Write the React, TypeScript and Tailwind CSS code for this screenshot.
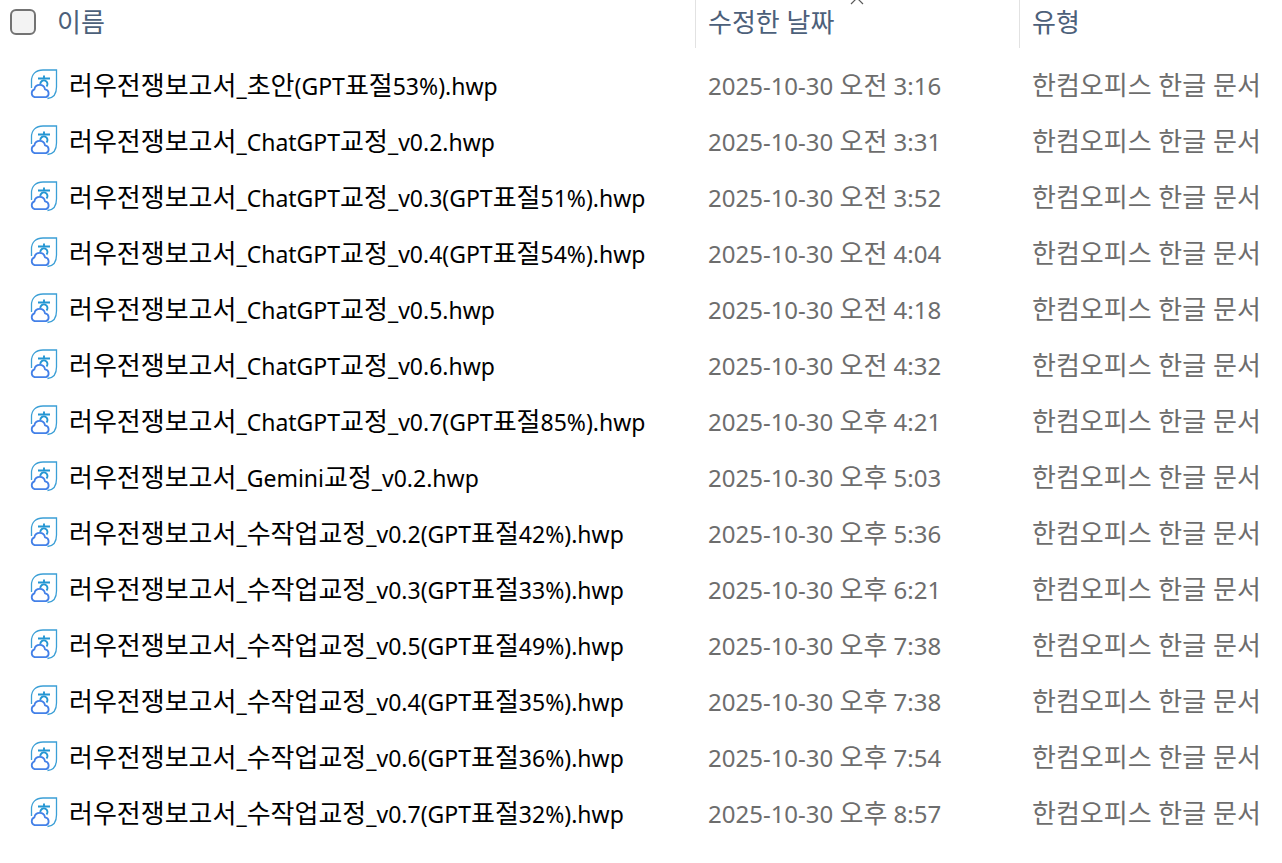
import React from 'react';

interface FileEntry {
  name: string;
  modified: string;
}

const files: FileEntry[] = [
  { name: '러우전쟁보고서_초안(GPT표절53%).hwp', modified: '2025-10-30 오전 3:16' },
  { name: '러우전쟁보고서_ChatGPT교정_v0.2.hwp', modified: '2025-10-30 오전 3:31' },
  { name: '러우전쟁보고서_ChatGPT교정_v0.3(GPT표절51%).hwp', modified: '2025-10-30 오전 3:52' },
  { name: '러우전쟁보고서_ChatGPT교정_v0.4(GPT표절54%).hwp', modified: '2025-10-30 오전 4:04' },
  { name: '러우전쟁보고서_ChatGPT교정_v0.5.hwp', modified: '2025-10-30 오전 4:18' },
  { name: '러우전쟁보고서_ChatGPT교정_v0.6.hwp', modified: '2025-10-30 오전 4:32' },
  { name: '러우전쟁보고서_ChatGPT교정_v0.7(GPT표절85%).hwp', modified: '2025-10-30 오후 4:21' },
  { name: '러우전쟁보고서_Gemini교정_v0.2.hwp', modified: '2025-10-30 오후 5:03' },
  { name: '러우전쟁보고서_수작업교정_v0.2(GPT표절42%).hwp', modified: '2025-10-30 오후 5:36' },
  { name: '러우전쟁보고서_수작업교정_v0.3(GPT표절33%).hwp', modified: '2025-10-30 오후 6:21' },
  { name: '러우전쟁보고서_수작업교정_v0.5(GPT표절49%).hwp', modified: '2025-10-30 오후 7:38' },
  { name: '러우전쟁보고서_수작업교정_v0.4(GPT표절35%).hwp', modified: '2025-10-30 오후 7:38' },
  { name: '러우전쟁보고서_수작업교정_v0.6(GPT표절36%).hwp', modified: '2025-10-30 오후 7:54' },
  { name: '러우전쟁보고서_수작업교정_v0.7(GPT표절32%).hwp', modified: '2025-10-30 오후 8:57' },
];

const FILE_TYPE = '한컴오피스 한글 문서';

// Hangul is set a little larger than the Latin text around it
const MixedText = ({ text }: { text: string }) => (
  <>
    {text.split(/([가-힣]+(?: [가-힣]+)*)/).filter(Boolean).map((part, i) =>
      /[가-힣]/.test(part) ? (
        <span key={i} className="text-[26px] leading-none">{part}</span>
      ) : (
        part
      )
    )}
  </>
);

const HwpIcon = () => (
  <svg className="w-[30px] h-8 mb-1 shrink-0" viewBox="0 0 30 32" fill="none" aria-hidden="true">
    <path
      d="M2.5 20V13C2.5 6 7 2 14 2H27.5V19C27.5 26 24.5 30 18.5 30.5"
      stroke="#3b9fd6"
      strokeWidth="1.3"
    />
    <path d="M15 7.4V9.6M9 10.5H21" stroke="#2496d3" strokeWidth="1.9" />
    <path d="M11.3 16.2A3.6 3.6 0 1 1 17.5 18.5" stroke="#2496d3" strokeWidth="1.9" />
    <path
      d="M5.6 29.2A4.2 4.2 0 0 1 5.4 21.3A5.4 5.4 0 0 1 16 21.3A4.1 4.1 0 0 1 17 29.2Z"
      fill="#fff"
      stroke="#4380e8"
      strokeWidth="1.8"
      strokeLinejoin="round"
    />
  </svg>
);

const SortCaret = () => (
  <svg
    className="absolute top-0 left-1/2 -translate-x-1/2 w-4 h-[5px]"
    viewBox="0 0 16 5"
    fill="none"
    stroke="#5a5a5a"
    strokeWidth="1.2"
    aria-hidden="true"
  >
    <path d="M2 4L8 -2L14 4" />
  </svg>
);

const App = () => (
  <main className="min-h-screen bg-white overflow-x-auto font-['Noto_Sans','Noto_Sans_CJK_KR',sans-serif] whitespace-nowrap">
    <table className="w-full table-fixed border-collapse text-left">
      <colgroup>
        <col className="w-[695px]" />
        <col className="w-[324px]" />
        <col />
      </colgroup>
      <thead className="text-[#4c607a]">
        <tr className="h-12">
          <th className="p-0 font-normal">
            <div className="flex items-center h-12 pl-[10px] pb-1 gap-[21px]">
              <input
                type="checkbox"
                aria-label="모두 선택"
                className="appearance-none size-[26px] rounded-md border-2 border-[#737373] bg-[#f3f3f3] checked:bg-[#0067c0]"
              />
              <button type="button" className="h-11 pt-[2px] text-2xl/8">
                <MixedText text="이름" />
              </button>
            </div>
          </th>
          <th className="relative p-0 font-normal" aria-sort="ascending">
            <SortCaret />
            <button type="button" className="block w-full h-12 pl-3 pb-[2px] text-left border-l border-[#e2e2e2] text-2xl/8">
              <MixedText text="수정한 날짜" />
            </button>
          </th>
          <th className="p-0 font-normal">
            <button type="button" className="block w-full h-12 pl-3 pb-[2px] text-left border-l border-[#e2e2e2] text-2xl/8">
              <MixedText text="유형" />
            </button>
          </th>
        </tr>
      </thead>
      <tbody className="before:block before:h-[10px]">
        {files.map((file) => (
          <tr key={file.name} className="h-14">
            <td className="p-0 text-[23px]/8 text-black">
              <div className="flex items-center pl-[29px] gap-[10px]">
                <HwpIcon />
                <span>
                  <MixedText text={file.name} />
                </span>
              </div>
            </td>
            <td className="p-0 pl-[13px] text-2xl/8 text-[#6d6d6d]">
              <MixedText text={file.modified} />
            </td>
            <td className="p-0 pl-[13px] text-2xl/8 text-[#6d6d6d]">
              <MixedText text={FILE_TYPE} />
            </td>
          </tr>
        ))}
      </tbody>
    </table>
  </main>
);

export default App;
